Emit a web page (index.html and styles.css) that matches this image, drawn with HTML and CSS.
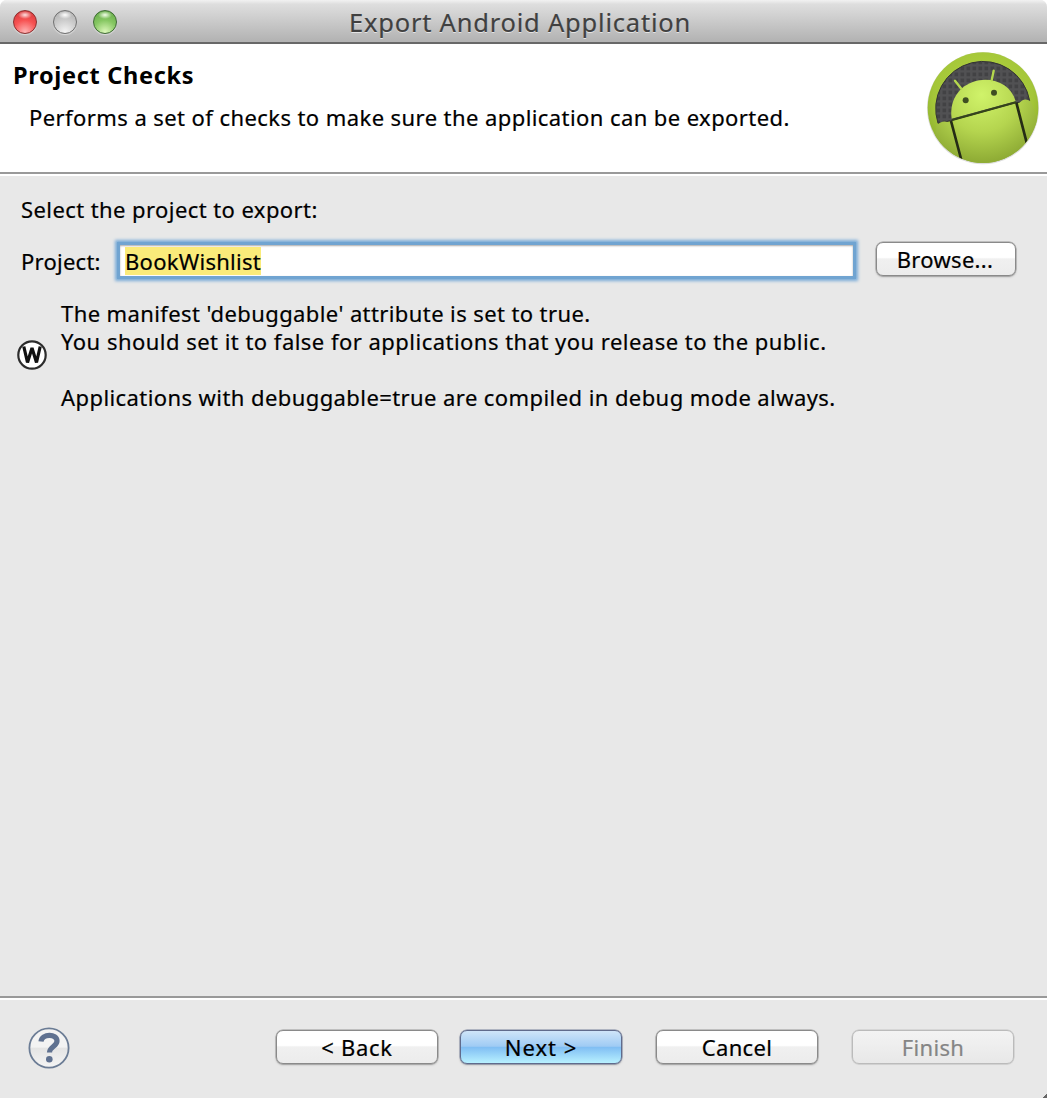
FILE: index.html
```html
<!DOCTYPE html>
<html lang="en">
<head>
<meta charset="utf-8">
<title>Export Android Application</title>
<link rel="stylesheet" href="styles.css">
</head>
<body>
<div class="window">
  <header class="titlebar">
    <div class="lights">
      <span class="light red"></span><span class="light gray"></span><span class="light green"></span>
    </div>
    <h1 class="title">Export Android Application</h1>
  </header>
  <section class="banner">
    <div>
      <h2 class="heading">Project Checks</h2>
      <p class="summary">Performs a set of checks to make sure the application can be exported.</p>
    </div>
    <svg class="logo" viewBox="48 30 342 345">
      <defs>
        <radialGradient id="disc" cx=".5" cy=".4" r=".6"><stop offset="0" stop-color="#b6d840"/><stop offset=".75" stop-color="#a4c639"/><stop offset="1" stop-color="#8bac2c"/></radialGradient>
        <radialGradient id="body" gradientUnits="userSpaceOnUse" cx="215" cy="165" r="200"><stop offset="0" stop-color="#d0f36a"/><stop offset=".55" stop-color="#b5d54f"/><stop offset="1" stop-color="#8fac35"/></radialGradient>
        <pattern id="weave" width="18" height="18" patternUnits="userSpaceOnUse"><rect width="18" height="18" fill="#424244"/><path d="M0 4H18M4 0V18" stroke="#515153" stroke-width="7"/></pattern>
        <clipPath id="edge"><circle cx="219" cy="203" r="166"/></clipPath>
      </defs>
      <circle cx="219" cy="205" r="168" fill="#777" opacity=".25"/>
      <circle cx="219" cy="203" r="166" fill="url(#disc)"/>
      <path d="M84 250A142 142 0 1 1 359 182L320 188L122 242Z" fill="url(#weave)" stroke="#333" stroke-width="3"/>
      <g clip-path="url(#edge)">
        <path d="M80 256Q99 236 121 250L158 375H60Z" fill="url(#body)"/>
        <path d="M327 190Q343 170 363 185L400 290L352 315Z" fill="url(#body)"/>
        <path d="M129 243L318 190L350 310L290 380H160Z" fill="url(#body)"/>
        <path d="M123 243L154 360M319 188L350 308" stroke="#252c16" stroke-width="8" fill="none"/>
        <path d="M125 236C116 175 155 130 207 121C257 113 303 136 317 184Z" fill="url(#body)"/>
        <path d="M126 240L318 187" stroke="#35441b" stroke-width="6"/>
      </g>
      <path d="M135 122L154 146M251 92L245 121" stroke="#b5d84d" stroke-width="7" stroke-linecap="round"/>
      <circle cx="167" cy="181" r="9" fill="#3f4e22"/><circle cx="252" cy="158" r="9" fill="#3f4e22"/>
    </svg>
  </section>
  <main class="content">
    <p class="prompt">Select the project to export:</p>
    <div class="row">
      <label class="label">Project:</label>
      <div class="field"><span class="selected">BookWishlist</span></div>
      <button class="btn browse">Browse...</button>
    </div>
    <div class="warning">
      <svg class="warn" viewBox="0 0 30 30"><circle cx="15" cy="15" r="13.7" fill="#fff" stroke="#2c2c2c" stroke-width="2.2"/><path d="M6.800 6.500L10.500 22.500L15 8L19.500 22.500L23.200 6.500" fill="none" stroke="#111" stroke-width="3.200" stroke-linejoin="bevel"/></svg>
      <div class="message">
        <p class="line-one">The manifest 'debuggable' attribute is set to true.</p>
        <p class="line-two">You should set it to false for applications that you release to the public.</p>
        <p class="note">Applications with debuggable=true are compiled in debug mode always.</p>
      </div>
    </div>
  </main>
  <footer class="footer">
    <svg class="help" viewBox="0 0 44 44"><defs><linearGradient id="glass" x2="0" y2="1"><stop offset=".48" stop-color="#f3f3f3"/><stop offset=".5" stop-color="#e4e4e4"/><stop offset="1" stop-color="#f5f5f5"/></linearGradient></defs><circle cx="22" cy="22" r="19.600" fill="url(#glass)" stroke="#6b7c95" stroke-width="1.800"/><path d="M14 15.500C15 7.500 30 7.500 30 15C30 20.500 22.500 20.500 22.500 26.500" fill="none" stroke="#5f7190" stroke-width="5.200"/><circle cx="22.300" cy="33.200" r="3.300" fill="#5f7190"/></svg>
    <button class="btn back">&lt; Back</button>
    <button class="btn primary">Next &gt;</button>
    <button class="btn cancel">Cancel</button>
    <button class="btn disabled" disabled>Finish</button>
  </footer>
</div>
</body>
</html>
```
FILE: styles.css
```css
* { box-sizing: border-box; }
html { background: #fff; }
body { margin: 0; color: #000; font: 22px/28px "Noto Sans", "Open Sans", sans-serif; letter-spacing: .42px; -webkit-text-stroke: .2px; }
h1, h2, p { margin: 0; }
.window { width: 1047px; height: 1098px; display: flex; flex-direction: column; background: linear-gradient(135deg, transparent 50%, #666 50%) right bottom / 4px 6px no-repeat, #e8e8e8; overflow: hidden; border-radius: 7px 7px 0 0; }
.titlebar { height: 44px; display: grid; grid-template-columns: 130px 1fr 137px; align-items: center; background: linear-gradient(#f2f2f2, #dedede 10%, #b4b4b4 95%); border-bottom: 2px solid #686868; }
.lights { display: flex; gap: 16px; padding: 2px 0 0 13px; }
.light { width: 24px; height: 24px; border-radius: 50%; border: 1.5px solid #666; box-shadow: 0 1px 1px #ddd; }
.red { background: radial-gradient(ellipse 7px 4px at 50% 18%, #ffe0e0, transparent), radial-gradient(circle at 50% 95%, #ffb5b5, #f75252 50%, #ce3538); border-color: #8c3030; }
.gray { background: radial-gradient(ellipse 7px 4px at 50% 18%, #fff, transparent), radial-gradient(circle at 50% 95%, #f4f4f4, #ccc 50%, #aaa); border-color: #707070; }
.green { background: radial-gradient(ellipse 7px 4px at 50% 18%, #f2ffe8, transparent), radial-gradient(circle at 50% 95%, #ddf8bb, #86c762 50%, #60a545); border-color: #3f6b35; }
.title { font-size: 25.5px; font-weight: 400; letter-spacing: .79px; text-align: center; color: #404040; text-shadow: 0 1px 0 #e4e4e4; padding-top: 2px; }
.banner { height: 132px; display: flex; justify-content: space-between; background: #fff; border-bottom: 2px solid #fff; box-shadow: inset 0 -2px #999; padding: 6px 7px 0 13px; }
.heading { font-size: 23.5px; font-weight: 700; letter-spacing: .68px; padding-top: 11px; -webkit-text-stroke: 0; }
.summary { padding: 14px 0 0 16px; }
.logo { width: 114px; height: 115px; }
.content { flex: 1; padding: 19px 0 0 17px; }
.prompt { padding-left: 4px; }
.row { display: flex; height: 43px; margin-top: 16px; }
.label { width: 94px; padding: 8px 0 0 4px; margin-right: 6px; letter-spacing: .25px; }
.field { width: 739px; height: 37px; margin: 3px 20px 0 0; background: #fff; border: 3px solid #70a4d1; box-shadow: 0 0 3px 2px #7aacd8, inset 0 1px 2px #aaa; padding: 2px 5px; }
.selected { display: inline-block; height: 28px; background: #faeb7a; letter-spacing: .27px; }
.btn { width: 162px; height: 34px; padding: 0; font: inherit; line-height: 28px; letter-spacing: .3px; color: #000; border: 1.5px solid #8a8a8a; border-radius: 7px; background: linear-gradient(#fff 45%, #f0f0f0 50%, #ececec); box-shadow: 0 0 0 .5px #999, 0 1px 2px #aaa; }
.browse { width: 140px; margin-top: 3px; padding-right: 2px; }
.warning { display: flex; padding-top: 17px; }
.warn { width: 30px; height: 30px; margin: 41px 14px 0 0; }
.line-one { letter-spacing: .4px; }
.line-two { letter-spacing: .475px; }
.note { padding-top: 28px; }
.footer { height: 102px; border-top: 2px solid #999; box-shadow: inset 0 2px #fff; display: flex; padding: 32px 33px 0 27px; }
.help { width: 44px; height: 44px; margin: -4px auto 0 0; }
.back { letter-spacing: .7px; }
.primary { margin: 0 34px 0 22px; letter-spacing: 1px; border-color: #606b8c; background: linear-gradient(#cfe5f9, #9fcbf4 48%, #7fbdf3 50%, #b8f1ff); box-shadow: 0 0 0 .5px #7a849e, 0 1px 2px #aaa; }
.cancel { margin-right: 34px; }
.disabled { color: #858585; border-color: #bbb; background: linear-gradient(#f3f3f3, #e8e8e8); box-shadow: 0 0 0 .5px #c4c4c4, 0 1px 1px #ddd; }
```
